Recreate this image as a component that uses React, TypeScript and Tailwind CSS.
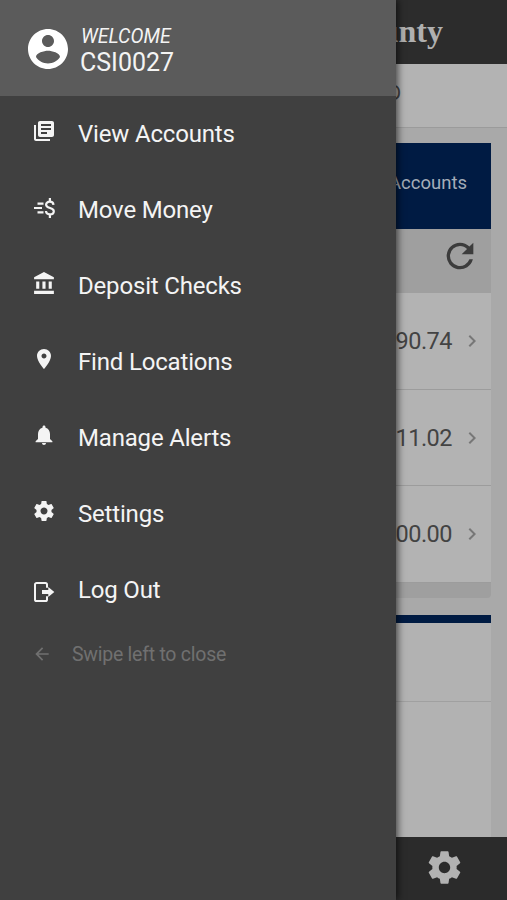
import type { ReactNode } from 'react';

const GEAR =
  'M19.43 12.98c.04-.32.07-.64.07-.98s-.03-.66-.07-.98l2.11-1.65c.19-.15.24-.42.12-.64l-2-3.46c-.12-.22-.39-.3-.61-.22l-2.49 1c-.52-.4-1.08-.73-1.69-.98l-.38-2.65C14.46 2.18 14.25 2 14 2h-4c-.25 0-.46.18-.49.42l-.38 2.65c-.61.25-1.17.59-1.69.98l-2.49-1c-.23-.09-.49 0-.61.22l-2 3.46c-.13.22-.07.49.12.64l2.11 1.65c-.04.32-.07.65-.07.98s.03.66.07.98l-2.11 1.65c-.19.15-.24.42-.12.64l2 3.46c.12.22.39.3.61.22l2.49-1c.52.4 1.08.73 1.69.98l.38 2.65c.03.24.24.42.49.42h4c.25 0 .46-.18.49-.42l.38-2.65c.61-.25 1.17-.59 1.69-.98l2.49 1c.23.09.49 0 .61-.22l2-3.46c.12-.22.07-.49-.12-.64l-2.11-1.65zM12 15.5c-1.93 0-3.5-1.57-3.5-3.5s1.57-3.5 3.5-3.5 3.5 1.57 3.5 3.5-1.57 3.5-3.5 3.5z';

function Icon({ className, children }: { className: string; children: ReactNode }) {
  return (
    <svg viewBox="0 0 24 24" fill="currentColor" className={'shrink-0 ' + className}>
      {children}
    </svg>
  );
}

const items: { label: string; icon: ReactNode }[] = [
  {
    label: 'View Accounts',
    icon: (
      <Icon className="mb-[6px] size-[24px]">
        <path d="M4 6H2v14c0 1.1.9 2 2 2h14v-2H4V6zm16-4H8c-1.1 0-2 .9-2 2v12c0 1.1.9 2 2 2h12c1.1 0 2-.9 2-2V4c0-1.1-.9-2-2-2zm-1 9H9V9h10v2zm-4 4H9v-2h6v2zm4-8H9V5h10v2z" />
      </Icon>
    ),
  },
  {
    label: 'Move Money',
    icon: (
      <Icon className="mb-[4px] size-[24px]">
        <path
          d="M5.500 7.600h6M2 12h8M5.500 16.400h6M21.500 8.900c-.2-2-1.600-3.200-3.700-3.200-2.200 0-3.700 1.200-3.700 3.100 0 4.200 7.700 2.300 7.700 6.400 0 1.900-1.600 3.100-3.900 3.100-2.200 0-3.800-1.200-4-3.300M17.900 2v4M17.900 18v4"
          fill="none"
          stroke="currentColor"
          strokeWidth="2.200"
        />
      </Icon>
    ),
  },
  {
    label: 'Deposit Checks',
    icon: (
      <Icon className="mb-[5px] size-[25px]">
        <path d="M4 10v7h3v-7H4zm6 0v7h3v-7h-3zM2 22h19v-3H2v3zm14-12v7h3v-7h-3zm-4.500-9L2 6v2h19V6l-9.500-5z" />
      </Icon>
    ),
  },
  {
    label: 'Find Locations',
    icon: (
      <Icon className="mb-[6px] size-[24px]">
        <path d="M12 2C8.130 2 5 5.130 5 9c0 5.250 7 13 7 13s7-7.750 7-13c0-3.870-3.130-7-7-7zm0 9.500c-1.380 0-2.500-1.120-2.500-2.500s1.120-2.500 2.500-2.500 2.500 1.120 2.500 2.500-1.120 2.500-2.500 2.500z" />
      </Icon>
    ),
  },
  {
    label: 'Manage Alerts',
    icon: (
      <Icon className="mb-[6px] size-[24px]">
        <path d="M12 22c1.100 0 2-.9 2-2h-4c0 1.100.9 2 2 2zm6-6v-5c0-3.070-1.630-5.640-4.500-6.320V4c0-.83-.67-1.500-1.500-1.500s-1.500.67-1.500 1.500v.68C7.640 5.360 6 7.920 6 11v5l-2.400 2.300v.9h16.800v-.9L18 16z" />
      </Icon>
    ),
  },
  {
    label: 'Settings',
    icon: (
      <Icon className="mb-[6px] size-[24px]">
        <path d={GEAR} />
      </Icon>
    ),
  },
  {
    label: 'Log Out',
    icon: (
      <Icon className="mt-[4px] size-[24px]">
        <path
          d="M15 7.800V4.500A1.600 1.600 0 0 0 13.400 2.900H4.600A1.600 1.600 0 0 0 3 4.500v15A1.600 1.600 0 0 0 4.600 21.100h8.800A1.600 1.600 0 0 0 15 19.500V16.200"
          fill="none"
          stroke="currentColor"
          strokeWidth="2"
        />
        <path d="M10 10.100h6.300V7L22.300 12l-6 5v-3.100H10z" />
      </Icon>
    ),
  },
];

const balances = ['90.74', '11.02', '00.00'];

function AccountsPage() {
  return (
    <div className="flex h-full flex-col bg-[#a9a9a9]">
      <header className="flex h-16 shrink-0 justify-end bg-[#2c2c2c] pr-[64px] font-['Liberation_Serif',serif] text-[32px] leading-[63px] font-bold text-[#b0b0b0]">
        unty
      </header>
      <div className="flex h-16 shrink-0 justify-end border-b border-[#9b9b9b] bg-[#b3b3b3] pr-[106px] text-[20px] leading-[58px] text-[#444]">
        D
      </div>
      <main className="flex grow flex-col pt-[15px] pr-4">
        <div className="flex h-[86px] shrink-0 items-center justify-end bg-[#001b43] pr-6 pb-[5px] text-[18.500px] text-[#a5adb8]">
          Accounts
        </div>
        <div className="flex h-[64px] shrink-0 justify-end bg-[#9f9f9f] pt-[7px] pr-[11px] text-[#3c3c3c]">
          <Icon className="size-[40px]">
            <path d="M17.650 6.350A7.960 7.960 0 0 0 12 4a8 8 0 1 0 7.730 10h-2.080A6 6 0 1 1 12 6c1.660 0 3.140.69 4.220 1.780L13 11h7V4l-2.350 2.350z" />
          </Icon>
        </div>
        {balances.map((amount) => (
          <div
            key={amount}
            className="flex h-[96.500px] shrink-0 items-center justify-end border-b border-[#9c9c9c] bg-[#b3b3b3] pt-[2px] pr-[7px] text-[23.500px] tracking-[-0.500px] text-[#434343]"
          >
            <span>{amount}</span>
            <Icon className="mb-px ml-[8px] size-[24px] text-[#777]">
              <path d="M10 6L8.590 7.410 13.170 12l-4.580 4.590L10 18l6-6z" />
            </Icon>
          </div>
        ))}
        <div className="h-[15px] shrink-0 rounded-b-sm bg-[#9f9f9f]" />
        <div className="mt-[17px] h-[87px] shrink-0 border-t-8 border-b border-t-[#001b43] border-b-[#a0a0a0] bg-[#b2b2b2]" />
        <div className="grow bg-[#b2b2b2]" />
      </main>
      <footer className="flex h-[63px] shrink-0 items-center justify-end bg-[#2b2b2b] pr-[43px] pb-[2px] text-[#b2b2b2]">
        <Icon className="size-[39px]">
          <path d={GEAR} />
        </Icon>
      </footer>
    </div>
  );
}

function Drawer() {
  return (
    <aside className="absolute inset-y-0 left-0 flex w-[396px] flex-col bg-[#404040] text-[#f4f4f4] shadow-[2px_0_7px_rgba(0,0,0,0.6)]">
      <div className="flex h-24 shrink-0 bg-[#5b5b5b] pt-[25px] pl-6">
        <Icon className="size-[48px] text-white">
          <path d="M12 2C6.480 2 2 6.480 2 12s4.480 10 10 10 10-4.480 10-10S17.520 2 12 2zm0 3c1.660 0 3 1.340 3 3s-1.340 3-3 3-3-1.340-3-3 1.340-3 3-3zm0 14.200c-2.500 0-4.710-1.280-6-3.220.03-1.990 4-3.080 6-3.080 1.990 0 5.970 1.090 6 3.080-1.290 1.940-3.500 3.220-6 3.220z" />
        </Icon>
        <div className="flex flex-col pl-[8px]">
          <span className="pl-px text-[19.500px] leading-[23px] italic">WELCOME</span>
          <span className="text-[25px] leading-[30px]">CSI0027</span>
        </div>
      </div>
      <nav className="flex flex-col">
        {items.map((item) => (
          <a key={item.label} className="flex h-[76px] items-center pl-8">
            <span className="flex w-[46px]">{item.icon}</span>
            <span className="text-[24px] leading-none tracking-[-0.180px]">{item.label}</span>
          </a>
        ))}
      </nav>
      <div className="flex h-[54px] items-center pl-8 text-[#707070]">
        <Icon className="mb-[3px] size-[20px]">
          <path d="M20 11H7.830l5.590-5.590L12 4l-8 8 8 8 1.410-1.410L7.830 13H20v-2z" />
        </Icon>
        <span className="pl-5 text-[19.500px] tracking-[-0.250px]">Swipe left to close</span>
      </div>
    </aside>
  );
}

export default function App() {
  return (
    <div className="relative h-[900px] w-[507px] overflow-hidden font-[Roboto,sans-serif]">
      <AccountsPage />
      <Drawer />
    </div>
  );
}
